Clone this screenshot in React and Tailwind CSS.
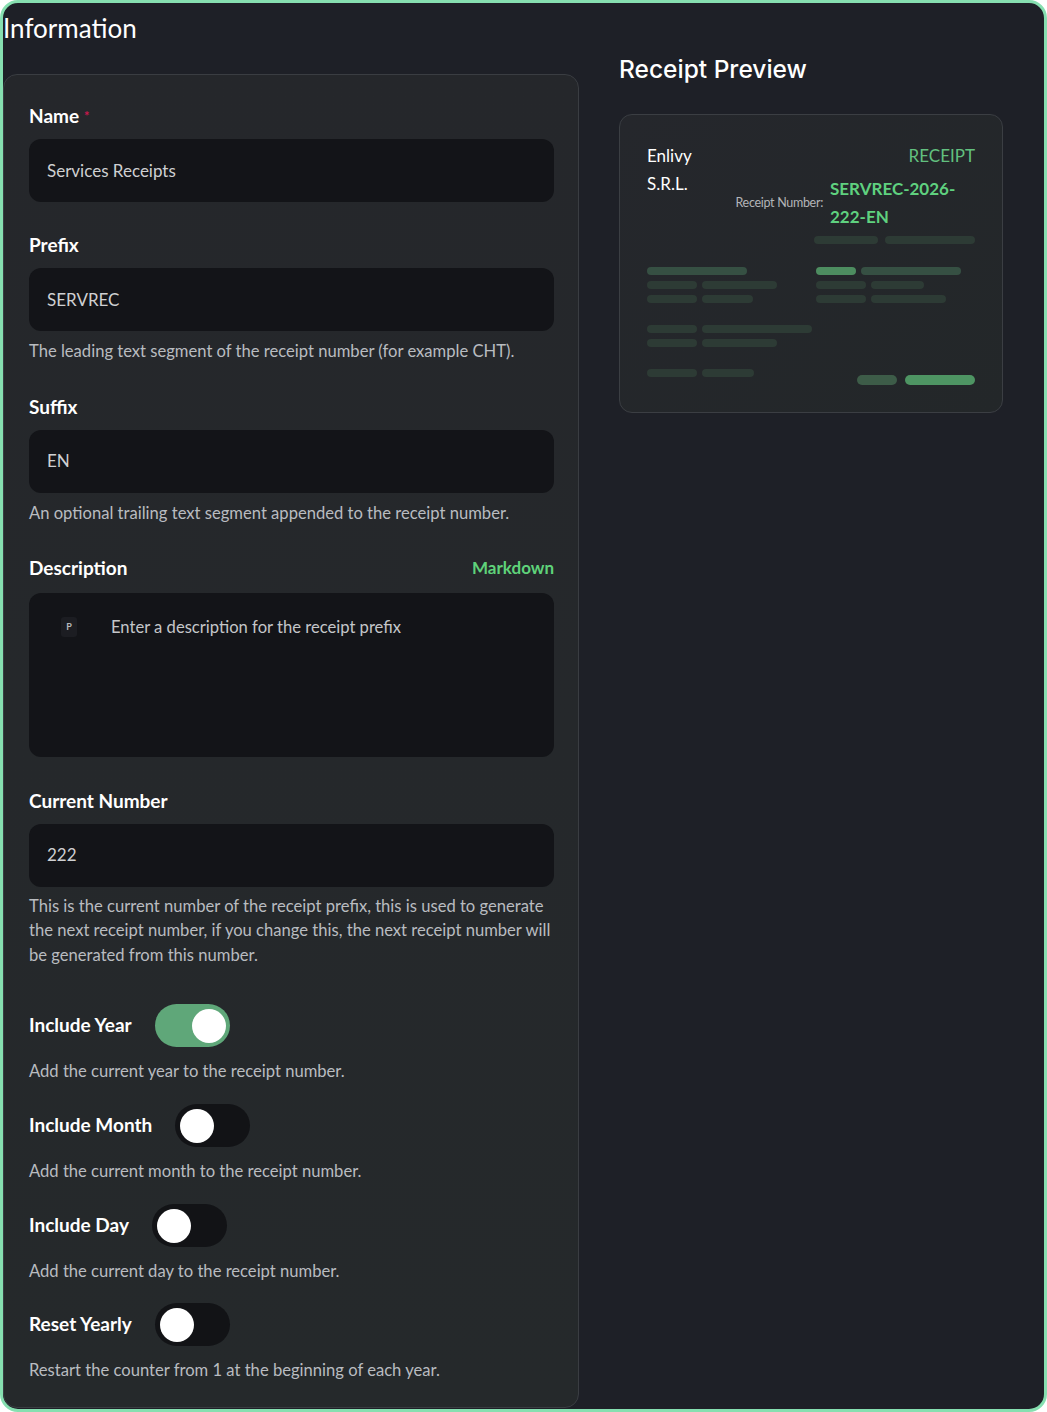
import React from "react";

const font = { fontFamily: "Lato, 'Noto Sans', sans-serif" };

const Label = ({ children, required }) => (
  <div className="h-[24px] leading-[24px] text-[19px] font-bold text-white">
    {children}
    {required && <span className="ml-[5px] align-top text-[13px] text-[#c8174d]">*</span>}
  </div>
);

const Input = ({ value }) => (
  <div className="flex h-[63px] items-center rounded-[12px] bg-[#131418] px-[18px] text-[17px] text-[#cfd0d2]">
    {value}
  </div>
);

const Help = ({ children }) => (
  <p className="text-[16.6px] leading-[24.5px] text-[#b9bcc0]">{children}</p>
);

const Toggle = ({ on }) => (
  <div
    className={
      on
        ? "flex h-[43px] w-[75px] items-center justify-end rounded-full bg-[#5fa779] px-[4px]"
        : "flex h-[43px] w-[75px] items-center justify-start rounded-full bg-[#121316] px-[5px]"
    }
  >
    <div className="h-[34px] w-[34px] rounded-full bg-white" />
  </div>
);

const ToggleRow = ({ label, on, help, className }) => (
  <div className={className}>
    <div className="flex items-center gap-[23px]">
      <span className="text-[19px] font-bold text-white">{label}</span>
      <Toggle on={on} />
    </div>
    <p className="mt-[12px] text-[16.6px] leading-[24px] text-[#b9bcc0]">{help}</p>
  </div>
);

const Bar = ({ w, c, h = "h-[8px]" }) => (
  <div className={`${h} rounded-full ${c}`} style={{ width: w }} />
);

const dim = "bg-[#2d3b35]";
const mid = "bg-[#365043]";
const bright = "bg-[#4d8d60]";

const ReceiptPreview = () => (
  <div className="h-[299px] w-[384px] rounded-[13px] border border-[#3b3e43] bg-gradient-to-br from-[#25272c] to-[#232729] px-[27px] pt-[27px]">
    <div className="flex justify-between">
      <div className="text-[17px] leading-[28px] text-white">
        <div>Enlivy</div>
        <div>S.R.L.</div>
      </div>
      <div className="flex flex-col items-end">
        <div className="text-[17px] leading-[28px] text-[#62c07f]">RECEIPT</div>
        <div className="mt-[5px] flex items-center">
          <span className="mr-[7px] shrink-0 whitespace-nowrap text-[12.5px] tracking-[-0.3px] text-[#b3b5b8]">
            Receipt Number:
          </span>
          <span className="w-[145px] text-[17px] font-bold leading-[28px] text-[#5fd17f]">
            SERVREC-2026-222-EN
          </span>
        </div>
      </div>
    </div>
    <div className="mt-[5px] flex justify-end gap-[7px]">
      <Bar w={64} c={dim} />
      <Bar w={90} c={dim} />
    </div>
    <div className="mt-[23px] flex">
      <div className="flex w-[169px] flex-col gap-[6px]">
        <Bar w={100} c={mid} />
        <div className="flex gap-[5px]">
          <Bar w={50} c={dim} />
          <Bar w={75} c={dim} />
        </div>
        <div className="flex gap-[5px]">
          <Bar w={50} c={dim} />
          <Bar w={51} c={dim} />
        </div>
        <div className="mt-[16px] flex gap-[5px]">
          <Bar w={50} c={dim} />
          <Bar w={110} c={dim} />
        </div>
        <div className="flex gap-[5px]">
          <Bar w={50} c={dim} />
          <Bar w={75} c={dim} />
        </div>
        <div className="mt-[16px] flex gap-[5px]">
          <Bar w={50} c={dim} />
          <Bar w={52} c={dim} />
        </div>
      </div>
      <div className="flex flex-1 flex-col">
        <div className="flex flex-col gap-[6px]">
          <div className="flex gap-[5px]">
            <Bar w={40} c={bright} />
            <Bar w={100} c={mid} />
          </div>
          <div className="flex gap-[5px]">
            <Bar w={50} c={dim} />
            <Bar w={53} c={dim} />
          </div>
          <div className="flex gap-[5px]">
            <Bar w={50} c={dim} />
            <Bar w={75} c={dim} />
          </div>
        </div>
        <div className="mt-[72px] flex justify-end gap-[8px]">
          <Bar w={40} c="bg-[#3d5c48]" h="h-[10px]" />
          <Bar w={70} c="bg-[#4e9563]" h="h-[10px]" />
        </div>
      </div>
    </div>
  </div>
);

export default function App() {
  return (
    <div
      style={font}
      className="flex h-[1412px] w-[1047px] overflow-hidden rounded-[18px] border-[3px] border-[#86dfb0] bg-[#1e2027]"
    >
      {/* Information column */}
      <div className="w-[576px] shrink-0 pt-[7px]">
        <h1 className="h-[36px] text-[26px] leading-[36px] text-white">Information</h1>
        <div className="mt-[28px] rounded-[14px] border border-[#3a3d42] bg-gradient-to-b from-[#25272b] to-[#25292b] pb-[25px] pl-[25px] pr-[24px] pt-[29px]">
          <Label required>Name</Label>
          <div className="mt-[11px]">
            <Input value="Services Receipts" />
          </div>

          <div className="mt-[31px]">
            <Label>Prefix</Label>
          </div>
          <div className="mt-[11px]">
            <Input value="SERVREC" />
          </div>
          <div className="mt-[8px]">
            <Help>The leading text segment of the receipt number (for example CHT).</Help>
          </div>

          <div className="mt-[31px]">
            <Label>Suffix</Label>
          </div>
          <div className="mt-[11px]">
            <Input value="EN" />
          </div>
          <div className="mt-[8px]">
            <Help>An optional trailing text segment appended to the receipt number.</Help>
          </div>

          <div className="mt-[30px] flex items-center justify-between">
            <Label>Description</Label>
            <span className="text-[17px] font-bold text-[#5fd27a]">Markdown</span>
          </div>
          <div className="mt-[12px] flex h-[164px] items-start rounded-[12px] bg-[#131418] pl-[32px] pt-[24px]">
            <span className="flex h-[20px] w-[16px] items-center justify-center rounded-[3px] bg-[#1c1d22] text-[9px] font-bold text-[#b7b9bd]">
              P
            </span>
            <span className="ml-[34px] text-[16.6px] leading-[20px] text-[#c4c6c9]">
              Enter a description for the receipt prefix
            </span>
          </div>

          <div className="mt-[32px]">
            <Label>Current Number</Label>
          </div>
          <div className="mt-[11px]">
            <Input value="222" />
          </div>
          <div className="mt-[7px]">
            <Help>
              This is the current number of the receipt prefix, this is used to generate the next
              receipt number, if you change this, the next receipt number will be generated from
              this number.
            </Help>
          </div>

          <ToggleRow
            className="mt-[37px]"
            label="Include Year"
            on
            help="Add the current year to the receipt number."
          />
          <ToggleRow
            className="mt-[21px]"
            label="Include Month"
            help="Add the current month to the receipt number."
          />
          <ToggleRow
            className="mt-[21px]"
            label="Include Day"
            help="Add the current day to the receipt number."
          />
          <ToggleRow
            className="mt-[20px]"
            label="Reset Yearly"
            help="Restart the counter from 1 at the beginning of each year."
          />
        </div>
      </div>

      {/* Preview column */}
      <div className="ml-[40px] pt-[49px]">
        <h2
          className="h-[34px] text-[24.5px] font-medium leading-[34px] text-white"
          style={{ fontFamily: "Inter, sans-serif" }}
        >
          Receipt Preview
        </h2>
        <div className="mt-[28px]">
          <ReceiptPreview />
        </div>
      </div>
    </div>
  );
}
